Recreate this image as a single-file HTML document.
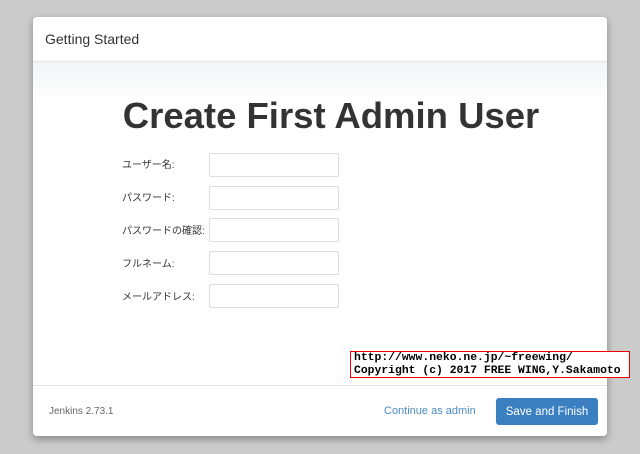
<!DOCTYPE html>
<html><head><meta charset="utf-8"><style>
body{margin:0;width:640px;height:454px;background:#cbcbcb;position:relative;overflow:hidden;font-family:"Liberation Sans","Noto Sans CJK JP",sans-serif}
.dlg{position:absolute;left:33px;top:17px;width:574px;height:419px;background:#fff;border-radius:4px;box-shadow:0 3px 8px rgba(0,0,0,.35);overflow:hidden}
.hd{height:44px;border-bottom:1px solid #e5e5e5;font-size:14px;color:#333;line-height:44px;padding-left:12px}
.body{position:absolute;top:45px;left:0;right:0;height:323px;background:linear-gradient(#f3f4f6,#fff 40px)}
h1{position:absolute;left:22px;right:0;top:78px;margin:0;text-align:center;font-size:36.5px;font-weight:bold;color:#333;letter-spacing:0}
.lbl{position:absolute;left:89px;font-size:10px;color:#333}
.in{position:absolute;left:176px;width:128px;height:22px;border:1px solid #ddd;border-radius:2px;background:#fff}
.ft{position:absolute;top:368px;left:0;right:0;height:51px;border-top:1px solid #e5e5e5;background:#fff}
.ver{position:absolute;left:16px;top:20px;font-size:10px;color:#666}
.cont{position:absolute;left:351px;top:19px;font-size:11px;color:#4a8cc8}
.btn{position:absolute;left:463px;top:12px;width:102px;height:27px;background:#3a7fc0;border-radius:3px;color:#fff;font-size:11.5px;text-align:center;line-height:28px}
.cr{position:absolute;left:350px;top:351px;width:275px;height:25px;border:1px solid #e00;background:#fff;font-family:"Liberation Mono",monospace;font-weight:bold;font-size:11.4px;line-height:13px;padding-left:3px;color:#000;white-space:pre;overflow:hidden}
</style></head><body>
<div class="dlg">
<div class="hd">Getting Started</div>
<div class="body"></div>
<h1>Create First Admin User</h1>
<div class="lbl" style="top:139px">ユーザー名:</div><div class="in" style="top:136px"></div>
<div class="lbl" style="top:172px">パスワード:</div><div class="in" style="top:169px"></div>
<div class="lbl" style="top:205px">パスワードの確認:</div><div class="in" style="top:201px"></div>
<div class="lbl" style="top:238px">フルネーム:</div><div class="in" style="top:234px"></div>
<div class="lbl" style="top:271px">メールアドレス:</div><div class="in" style="top:267px"></div>
<div class="ft"><div class="ver">Jenkins 2.73.1</div><div class="cont">Continue as admin</div><div class="btn">Save and Finish</div></div>
</div>
<div class="cr">http://www.neko.ne.jp/~freewing/
Copyright (c) 2017 FREE WING,Y.Sakamoto</div>
</body></html>
